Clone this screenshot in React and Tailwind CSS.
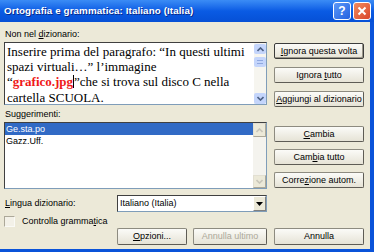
import React from 'react';

const ui = { fontFamily: '"Liberation Sans", Arial, sans-serif' };
const serif = { fontFamily: '"Liberation Serif", "Times New Roman", serif' };

const Btn = ({ children, def, disabled, className = '' }) => (
  <div
    className={`flex items-center justify-center h-[16px] rounded-[2px] bg-gradient-to-b from-[#fbfbf8] to-[#e6e3d6] text-[9px] leading-none ${
      def ? 'border border-[#3c3c3c] shadow-[inset_-1px_-1px_0_#9a978a]' : 'border border-[#8d8b80] border-r-[#5e5c55] border-b-[#5e5c55]'
    } ${disabled ? 'text-[#aca899]' : 'text-black'} ${className}`}
    style={ui}
  >
    <span className="whitespace-pre">{children}</span>
  </div>
);

const Chevron = ({ up, color = '#4d6185' }) => (
  <svg width="7" height="5" viewBox="0 0 7 5">
    <path d={up ? 'M0.5 4 L3.5 1 L6.5 4' : 'M0.5 1 L3.5 4 L6.5 1'} stroke={color} strokeWidth="1.6" fill="none" />
  </svg>
);

const U = ({ children }) => <span className="underline underline-offset-1">{children}</span>;

export default function App() {
  return (
    <div className="w-[374px] h-[252px] overflow-hidden flex flex-col bg-[#0a53d9]" style={ui}>
      {/* Title bar */}
      <div className="h-[22px] flex items-center pl-[4px] pr-[3px] bg-gradient-to-b from-[#3b8cf5] via-[#0a5be4] to-[#0650d6]">
        <span className="flex-1 text-white font-bold text-[9.8px] tracking-[0.1px] [text-shadow:1px_1px_0_#0a2a8a]">
          Ortografia e grammatica: Italiano (Italia)
        </span>
        <div className="flex gap-[2px]">
          <div className="w-[18px] h-[18px] rounded-[3px] border border-white bg-gradient-to-br from-[#5b98f8] to-[#2561e0] flex items-center justify-center text-white font-bold text-[12px]">
            ?
          </div>
          <div className="w-[18px] h-[18px] rounded-[3px] border border-white bg-gradient-to-br from-[#f08a5f] to-[#d9442a] flex items-center justify-center">
            <svg width="10" height="10" viewBox="0 0 10 10">
              <path d="M1.5 1.5 L8.5 8.5 M8.5 1.5 L1.5 8.5" stroke="white" strokeWidth="2" />
            </svg>
          </div>
        </div>
      </div>

      {/* Body */}
      <div className="flex-1 mr-[4px] mb-[3px] bg-[#ece9d8] pl-[4px] text-[9px] text-black">
        <div className="flex gap-[7px]">
          {/* Left column */}
          <div className="w-[263px] flex flex-col">
            <div className="h-[20px] flex items-end pb-[3px] leading-none pl-[1px]">
              <span>
                Non nel <U>d</U>izionario:
              </span>
            </div>
            <div className="h-[63px] flex border border-[#7f9db9] border-l-[#404040] border-t-[#404040] bg-white">
              <div className="flex-1 pl-[2px] pt-[1px] text-[13px] leading-[15.2px] whitespace-nowrap overflow-hidden" style={serif}>
                <div>Inserire prima del paragrafo: “In questi ultimi</div>
                <div>spazi virtuali…” l’immagine</div>
                <div>
                  “<span className="font-bold text-[#f01818]">grafico.jpg</span>
                  <span className="inline-block w-[1px] h-[13px] bg-black align-[-2px]"></span>”che si trova sul disco C nella
                </div>
                <div>cartella SCUOLA.</div>
              </div>
              <div className="w-[12px] flex flex-col bg-[#f6f5ef]">
                <div className="h-[10px] mt-[1px] rounded-[2px] bg-[#c4d5fb] flex items-center justify-center">
                  <Chevron up />
                </div>
                <div className="h-[10px] mt-[3px] rounded-[2px] bg-[#c4d5fb] flex items-center justify-center">
                  <div className="w-[6px] h-[4px] border-y border-[#8fa8e0]"></div>
                </div>
                <div className="flex-1"></div>
                <div className="h-[11px] rounded-[2px] bg-[#c4d5fb] flex items-center justify-center">
                  <Chevron />
                </div>
              </div>
            </div>
            <div className="h-[17px] flex items-center pt-[2px] leading-none pl-[1px]">
              <span>
                Su<U>g</U>gerimenti:
              </span>
            </div>
            <div className="h-[67px] flex border border-[#7f9db9] border-l-[#404040] border-t-[#404040] bg-white">
              <div className="flex-1 leading-[12px]">
                <div className="bg-[#316ac5] text-white pl-[1px]">Ge.sta.po</div>
                <div className="pl-[1px]">Gazz.Uff.</div>
              </div>
              <div className="w-[13px] flex flex-col bg-[#f4f3ee]">
                <div className="h-[14px] border border-[#e2dfd2] border-r-[#aca899] border-b-[#aca899] bg-[#ece9d8] flex items-center justify-center">
                  <Chevron up color="#c8c6ba" />
                </div>
                <div className="flex-1"></div>
                <div className="h-[13px] border border-[#e2dfd2] border-r-[#aca899] border-b-[#aca899] bg-[#ece9d8] flex items-center justify-center">
                  <Chevron color="#c8c6ba" />
                </div>
              </div>
            </div>
          </div>

          {/* Right column */}
          <div className="w-[90px] flex flex-col pt-[21px]">
            <div className="flex flex-col gap-[8px]">
              <Btn def>
                <U>I</U>gnora questa volta
              </Btn>
              <Btn>
                Ignora <U>t</U>utto
              </Btn>
              <Btn>
                <U>A</U>ggiungi al dizionario
              </Btn>
            </div>
            <div className="flex flex-col gap-[7px] mt-[19px]">
              <Btn>
                <U>C</U>ambia
              </Btn>
              <Btn>
                Cam<U>b</U>ia tutto
              </Btn>
              <Btn>
                Corre<U>z</U>ione autom.
              </Btn>
            </div>
          </div>
        </div>

        {/* Lingua dizionario */}
        <div className="flex items-center mt-[6px] h-[17px]">
          <div className="w-[113px] pl-[1px] leading-none">
            <U>L</U>ingua dizionario:
          </div>
          <div className="w-[150px] h-[17px] flex items-center border border-[#7f9db9] border-l-[#404040] border-t-[#404040] bg-white">
            <span className="flex-1 pl-[2px]">Italiano (Italia)</span>
            <div className="w-[13px] h-[15px] bg-[#ece9d8] border border-white border-r-[#808080] border-b-[#808080] flex items-center justify-center">
              <svg width="7" height="4" viewBox="0 0 7 4">
                <path d="M0 0 H7 L3.5 4 Z" fill="black" />
              </svg>
            </div>
          </div>
        </div>

        {/* Checkbox */}
        <div className="flex items-center h-[11px] mt-[4px]">
          <div className="w-[11px] h-[11px] border border-[#aca899] border-r-[#fafaf6] border-b-[#fafaf6] bg-[#f3f1e8]"></div>
          <span className="ml-[7px] leading-none">
            Controlla gramma<U>t</U>ica
          </span>
        </div>

        {/* Footer buttons */}
        <div className="flex mt-[1px] pl-[113px]">
          <Btn className="w-[70px] h-[17px]">
            <U>O</U>pzioni...
          </Btn>
          <Btn disabled className="w-[74px] ml-[6px] h-[17px]">
            Annulla ultimo
          </Btn>
          <Btn className="w-[90px] ml-[7px] h-[17px]">Annulla</Btn>
        </div>
      </div>
    </div>
  );
}
